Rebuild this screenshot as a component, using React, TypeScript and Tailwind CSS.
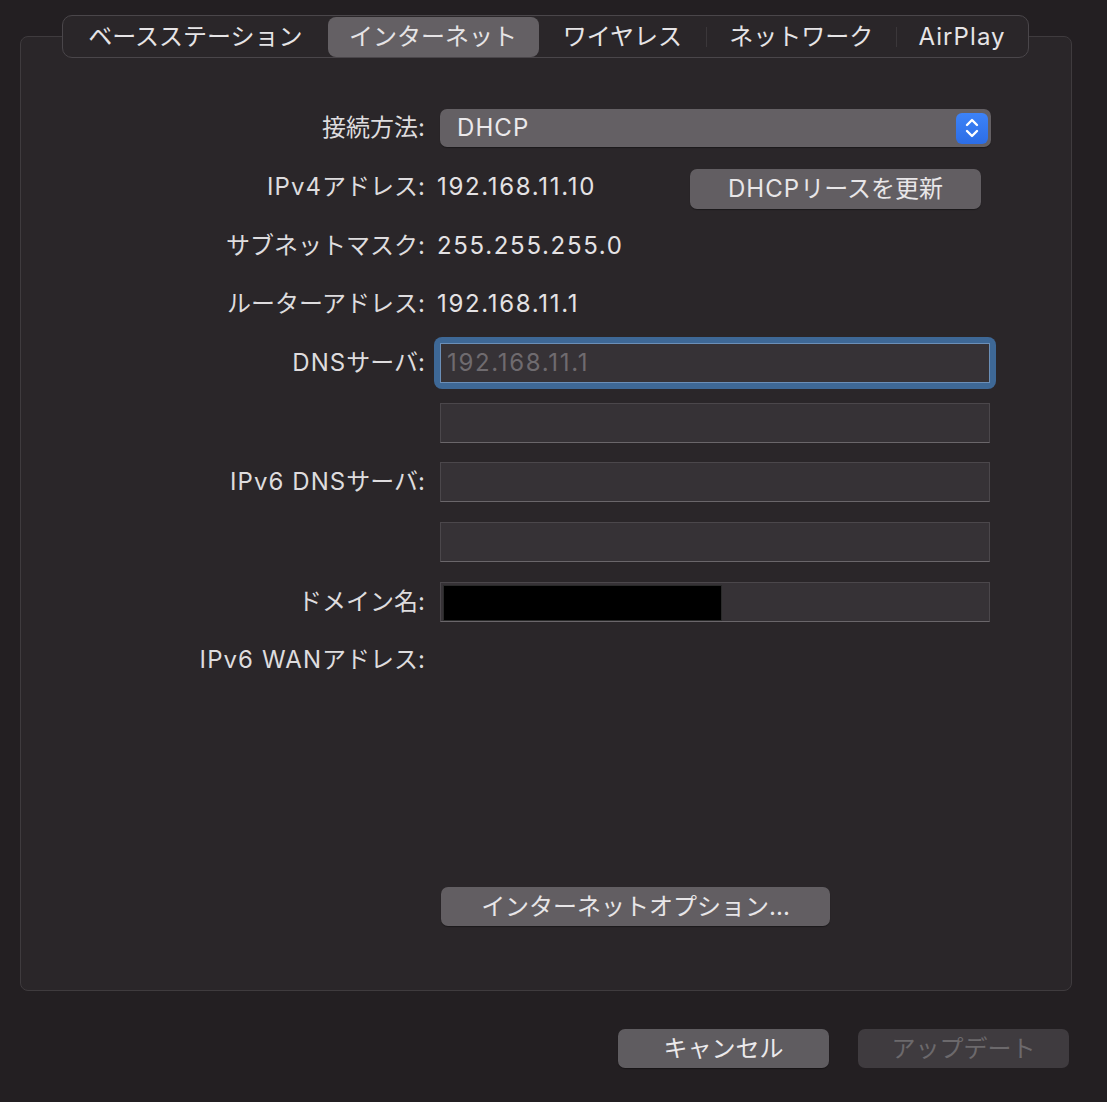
import React from 'react';

const font = { fontFamily: '"Inter", "Noto Sans CJK JP", sans-serif' };

// latin runs sit a little wider in the original system font
function L({ children }: { children: React.ReactNode }) {
  return <span className="tracking-[0.045em]">{children}</span>;
}

// digits are wider still
function N({ children }: { children: React.ReactNode }) {
  return <span className="tracking-[0.07em]">{children}</span>;
}

const tabs = [
  { label: 'ベースステーション', w: 'w-[265px]' },
  { label: 'インターネット', w: 'w-[211px]', active: true },
  { label: 'ワイヤレス', w: 'w-[168px]' },
  { label: 'ネットワーク', w: 'w-[190px]' },
  { label: <L>AirPlay</L>, w: 'w-[132px]' },
];

function Field({ children }: { children?: React.ReactNode }) {
  return (
    <div className="ml-[3px] w-[550px] h-[40px] bg-[#363236] border border-[#4b474b] border-b-[#6a666a] relative">
      {children}
    </div>
  );
}

function Row({ label, h, children }: { label?: React.ReactNode; h: string; children?: React.ReactNode }) {
  return (
    <div className={`grid grid-cols-[404px_1fr] gap-x-[12px] items-center ${h}`}>
      <div className="text-right text-[24px] leading-none text-[#dedcde]">{label}</div>
      <div className="flex items-center">{children}</div>
    </div>
  );
}

export default function App() {
  return (
    <div className="w-[1107px] h-[1102px] bg-[#231f22] pt-[15px] px-[20px] overflow-hidden" style={font}>
      {/* Tabs */}
      <div className="relative z-10 ml-[42px] w-[967px] h-[43px] flex items-center rounded-[10px] border border-[#4a464a] bg-[#2a2629]">
        {tabs.map((t, i) => (
          <div key={i} className={`relative flex items-center justify-center h-[40px] ${t.w}`}>
            {t.active ? <div className="absolute inset-0 rounded-[8px] bg-[#646064]" /> : null}
            {i > 2 && <div className="absolute left-0 top-[10px] h-[20px] w-px bg-[#3b373a]" />}
            <span className="relative text-[24px] leading-none text-[#e6e4e6]">{t.label}</span>
          </div>
        ))}
      </div>

      {/* Panel */}
      <div className="-mt-[22px] w-[1052px] h-[955px] rounded-[8px] border border-[#3f3b3e] bg-[#2a2629] pt-[61px]">
        <Row label="接続方法:" h="h-[60px]">
          <div className="ml-[3px] w-[551px] h-[38px] rounded-[7px] bg-[#646064] flex items-center justify-between pl-[17px] pr-[3px] shadow-[0_1px_1px_rgba(0,0,0,0.35)]">
            <span className="text-[24px] leading-none text-[#ebe9eb]"><L>DHCP</L></span>
            <div className="w-[32px] h-[31px] rounded-[6px] bg-gradient-to-b from-[#3d83f7] to-[#2c6de6] flex items-center justify-center">
              <svg width="16" height="22" viewBox="0 0 16 22" fill="none" stroke="white" strokeWidth="2.4" strokeLinecap="round" strokeLinejoin="round">
                <path d="M3 8 L8 3 L13 8" />
                <path d="M3 14 L8 19 L13 14" />
              </svg>
            </div>
          </div>
        </Row>
        <Row label={<><L>IPv4</L>アドレス:</>} h="h-[58px]">
          <span className="w-[253px] text-[24px] leading-none text-[#e4e2e4]"><N>192.168.11.10</N></span>
          <div className="w-[291px] h-[40px] mt-[4px] rounded-[7px] bg-[#625e62] flex items-center justify-center text-[24px] leading-none text-[#e8e6e8] shadow-[0_1px_1px_rgba(0,0,0,0.35)]">
            <L>DHCP</L>リースを更新
          </div>
        </Row>
        <Row label="サブネットマスク:" h="h-[60px]">
          <span className="text-[24px] leading-none text-[#e4e2e4]"><N>255.255.255.0</N></span>
        </Row>
        <Row label="ルーターアドレス:" h="h-[56px]">
          <span className="text-[24px] leading-none text-[#e4e2e4]"><N>192.168.11.1</N></span>
        </Row>
        <Row label={<><L>DNS</L>サーバ:</>} h="h-[62px]">
          <div className="-my-[6px] p-[6px] -ml-[3px] rounded-[8px] bg-[#3e6896]">
            <div className="w-[550px] h-[40px] bg-[#363236] border border-[#6b8fb8] flex items-center pl-[6px]">
              <span className="text-[24px] leading-none text-[#6f6b6f]"><N>192.168.11.1</N></span>
            </div>
          </div>
        </Row>
        <Row h="h-[58px]">
          <Field />
        </Row>
        <Row label={<><L>IPv6 DNS</L>サーバ:</>} h="h-[60px]">
          <Field />
        </Row>
        <Row h="h-[60px]">
          <Field />
        </Row>
        <Row label="ドメイン名:" h="h-[60px]">
          <Field>
            <div className="absolute left-[2px] top-[2px] bottom-0 w-[279px] bg-black border border-[#2a2a2a]" />
          </Field>
        </Row>
        <Row label={<><L>IPv6 WAN</L>アドレス:</>} h="h-[56px]" />

        <div className="mt-[199px] ml-[420px] w-[389px] h-[39px] rounded-[7px] bg-[#625e62] flex items-center justify-center text-[24px] leading-none text-[#e8e6e8] shadow-[0_1px_1px_rgba(0,0,0,0.35)]">
          インターネットオプション...
        </div>
      </div>

      {/* Bottom buttons */}
      <div className="mt-[38px] flex justify-end gap-[29px] pr-[18px]">
        <div className="w-[211px] h-[39px] rounded-[7px] bg-[#5f5c60] flex items-center justify-center text-[24px] leading-none text-[#ebe9eb] shadow-[0_1px_1px_rgba(0,0,0,0.35)]">
          キャンセル
        </div>
        <div className="w-[211px] h-[39px] rounded-[7px] bg-[#3f3b3f] flex items-center justify-center text-[24px] leading-none text-[#6c696c]">
          アップデート
        </div>
      </div>
    </div>
  );
}
